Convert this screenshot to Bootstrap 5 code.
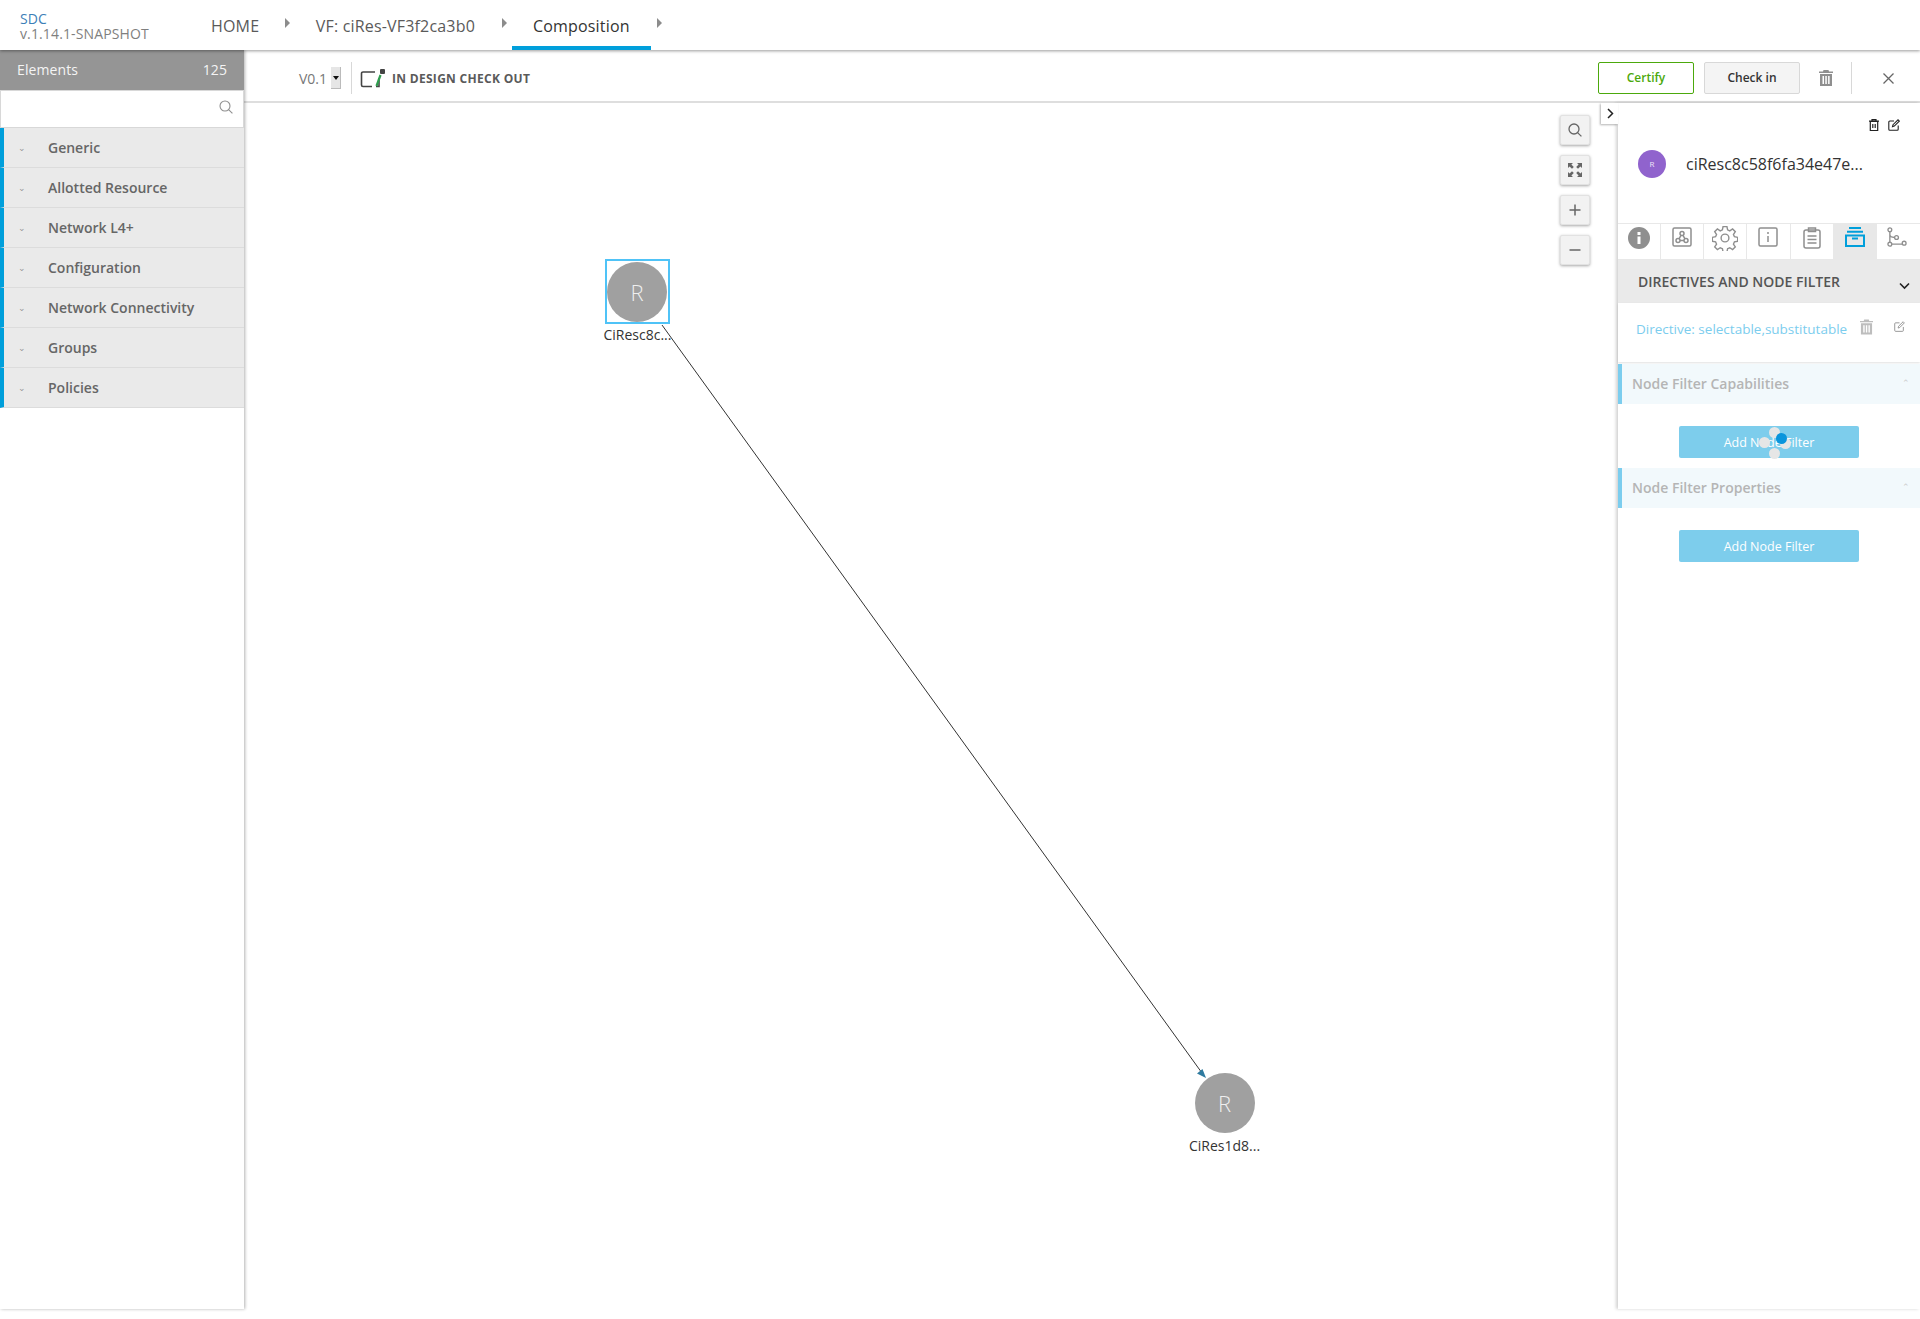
<!DOCTYPE html>
<html lang="en">
<head>
  <meta charset="UTF-8">
  <meta name="viewport" content="width=device-width, initial-scale=1.0">
  <title>SDC Composition</title>
  <link href="https://cdn.jsdelivr.net/npm/bootstrap@5.3.0/dist/css/bootstrap.min.css" rel="stylesheet">
  <style>
    body { font-family: "Open Sans", "Liberation Sans", sans-serif; color: #333; background: #fff; height: 1319px; overflow: hidden; }
    .top-head { height: 50px; position: relative; z-index: 5; box-shadow: 0 1px 3px rgba(0,0,0,.4); background: #fff; }
    .brand-box { width: 211px; padding: 10.5px 0 0 20px; font-size: 14px; line-height: 15px; color: #7f7f7f; letter-spacing: .13px; }
    .brand-box b { display: block; font-weight: 400; color: #3d7fb8; }
    .crumb { font-size: 16px; color: #5a5a5a; line-height: 52px; height: 50px; letter-spacing: .18px; }
    .crumb-arrow { width: 0; height: 0; border-left: 5px solid #8c8c8c; border-top: 5px solid transparent; border-bottom: 5px solid transparent; margin-top: -4px; }
    .arrow-a { margin-left: 26px; margin-right: 24px; }
    .arrow-b { margin-left: 27px; margin-right: 26px; }
    .arrow-c { margin-left: 6px; }
    .crumb-path { margin-left: 1.5px; }
    .crumb-active { color: #333; padding: 0 21px; border-bottom: 4px solid #009fdb; margin-left: -21px; }
    .work-row { height: 1259px; }
    .side-col { width: 244px; flex: none; position: relative; z-index: 3; box-shadow: 1px 0 3px rgba(0,0,0,.3); background: #fff; }
    .side-head { height: 40px; background: #959595; color: #f4f4f4; font-size: 14px; padding: 0 17px 2px; letter-spacing: .1px; }
    .side-search { height: 38px; border: 1px solid #d8d8d8; padding: 0 10px 4px 0; background: #fff; }
    .side-item { height: 40px; background: #eaeaea; border-left: 4px solid #009fdb; border-bottom: 1px solid #dcdcdc; font-size: 14px; font-weight: 600; color: #666; }
    .side-item span { width: 44px; font-size: 9px; font-weight: 400; padding-left: 14px; color: #999; }
    .tool-bar { height: 53px; padding-top: 5px; border-bottom: 2px solid #dedede; flex: none; }
    .ver-txt { font-size: 14px; color: #777; margin-left: 55px; width: 32px; }
    .ver-drop { width: 10px; height: 22px; background: #e6e6e6; border: 1px solid #bbb; border-width: 0 1px 1px 0; margin-right: 10px; }
    .ver-drop i { border-top: 4px solid #111; border-left: 3px solid transparent; border-right: 3px solid transparent; }
    .tool-div { width: 1px; height: 32px; background: #d8d8d8; }
    .tool-div-end { margin: 0 31px 0 18px; }
    .state-txt { font-size: 12px; font-weight: 700; color: #5a5a5a; margin: 2px 0 0 6px; letter-spacing: .3px; }
    .act-btn { width: 96px; height: 32px; font-size: 12px; font-weight: 600; padding: 0; border-radius: 2px; line-height: 30px; }
    .act-cert { color: #4ca90c; border: 1px solid #4ca90c; background: #fff; }
    .act-check { color: #333; border: 1px solid #d8d8d8; background: #f4f4f4; margin-left: 10px; }
    .trash-top { margin-left: 19px; }
    .close-x { margin-right: 26px; }
    .canvas-box { flex: 1; position: relative; background: #fff; overflow: hidden; }
    .edge-svg { position: absolute; left: 0; top: 0; width: 100%; height: 100%; }
    .node-sel { position: absolute; left: 360.5px; top: 156px; width: 65px; height: 65px; border: 2px solid #4fc3f7; }
    .node-dot { position: absolute; width: 60px; height: 60px; border-radius: 50%; background: #a0a0a0; color: #efefef; font-size: 22px; font-weight: 300; display: flex; align-items: center; justify-content: center; }
    .node-one { left: 363px; top: 159px; }
    .node-two { left: 950.5px; top: 970px; }
    .node-name { position: absolute; width: 80px; text-align: center; font-size: 14px; line-height: 18px; color: #333; white-space: nowrap; }
    .name-one { left: 353.5px; top: 223px; }
    .name-two { left: 940.5px; top: 1034px; }
    .zoom-stack { position: absolute; right: 28px; top: 12px; }
    .zoom-btn { width: 30px; height: 30px; background: #f2f2f2; border: 1px solid #e2e2e2; border-radius: 2px; box-shadow: 0 1px 3px rgba(0,0,0,.35); margin-bottom: 10px; color: #666; }
    .panel-col { width: 302px; flex: none; position: relative; background: #fff; box-shadow: -2px 0 3px rgba(0,0,0,.18); }
    .panel-tab { position: absolute; left: -17px; top: 0; width: 17px; height: 21px; padding-left: 2px; background: #fff; box-shadow: -1px 1px 2px rgba(0,0,0,.3); }
    .panel-tools { height: 44px; padding: 0 20px 0 0; gap: 9px; }
    .panel-title { height: 76px; padding: 0 0 42px 20px; font-size: 16px; color: #333; }
    .panel-avatar { width: 28px; height: 28px; border-radius: 50%; background: #9063cd; color: #efe6f8; font-size: 8px; margin-right: 20px; }
    .icon-tabs { height: 37px; border-top: 1px solid #e8e8e8; border-bottom: 1px solid #e8e8e8; }
    .icon-cell { width: 43.3px; border-right: 1px solid #e8e8e8; color: #8f8f8f; padding-top: 3px; }
    .icon-cell.on { background: #e8e8e8; color: #009fdb; border-right-color: #e8e8e8; }
    .icon-cell.last { border: 0; padding: 3px 3px 0 0; }
    .icon-cell.gear { padding-top: 1px; }
    .sec-head { height: 43px; background: #eaeaea; font-size: 14px; font-weight: 600; color: #555; padding: 0 10px 0 20px; }
    .sec-chev { margin-top: 9px; }
    .dir-row { height: 59px; padding: 16px 15px 0 18px; font-size: 13.5px; color: #7ccdee; box-shadow: 0 1px 2px rgba(0,0,0,.12); margin-bottom: 2px; align-items: flex-start !important; }
    .dir-trash { margin-left: auto; }
    .dir-edit { margin-left: 21px; margin-top: 2px; }
    .filter-head { height: 40px; background: #f2f9fc; border-left: 4px solid #7ccdee; font-size: 14px; font-weight: 600; color: #b5b5b5; padding: 0 10px 2px 10px; }
    .filter-head span { font-size: 9px; font-weight: 400; color: #ccc; }
    .filter-body { height: 64px; position: relative; padding-top: 22px; }
    .add-btn { width: 180px; height: 32px; background: #7dcdec; color: #fff; font-size: 12.5px; font-weight: 400; border: 0; border-radius: 2px; padding: 3px 0 0; margin-left: 61px; }
    .spin-dot { position: absolute; width: 11px; height: 11px; border-radius: 50%; background: #e6e6e6; }
    .spin-top { left: 150.5px; top: 22.5px; }
    .spin-left { left: 140.5px; top: 32.5px; }
    .spin-right { left: 161.5px; top: 33.5px; }
    .spin-bottom { left: 150.5px; top: 43.5px; }
    .spin-on { left: 157.5px; top: 28.5px; background: #0a95dc; }
  </style>
</head>
<body>
  <nav class="top-head d-flex align-items-start">
    <div class="brand-box"><b>SDC</b>v.1.14.1-SNAPSHOT</div>
    <div class="crumb">HOME</div>
    <div class="crumb-arrow arrow-a align-self-center"></div>
    <div class="crumb crumb-path">VF: ciRes-VF3f2ca3b0</div>
    <div class="crumb-arrow arrow-b align-self-center"></div>
    <div class="crumb crumb-active">Composition</div>
    <div class="crumb-arrow arrow-c align-self-center"></div>
  </nav>

  <div class="work-row d-flex">
    <aside class="side-col">
      <div class="side-head d-flex align-items-center justify-content-between"><span>Elements</span><span>125</span></div>
      <div class="side-search d-flex align-items-center justify-content-end">
        <svg width="14" height="14" viewBox="0 0 14 14" fill="none" stroke="#8f8f8f" stroke-width="1.1"><circle cx="6" cy="6" r="5"/><path d="M9.6 9.6l3.8 3.8"/></svg>
      </div>
      <div id="sideList"></div>
    </aside>

    <div class="flex-grow-1 d-flex flex-column">
      <div class="tool-bar d-flex align-items-center">
        <div class="ver-txt">V0.1</div>
        <div class="ver-drop d-flex align-items-center justify-content-center"><i></i></div>
        <div class="tool-div"></div>
        <svg class="ms-2" width="26" height="20" viewBox="0 0 26 20" fill="none" stroke="#444" stroke-width="1.6">
          <path d="M15 4H3a1.5 1.5 0 0 0-1.500 1.500V17a1.500 1.500 0 0 0 1.500 1.500h9"/><path d="M19 10v8.500h-3"/>
          <path d="M20.500 7l-4 11" stroke="#2e9e4f" stroke-width="2.200"/><rect x="20" y="1" width="5" height="5" rx="1" fill="#444" stroke="none"/>
        </svg>
        <div class="state-txt">IN DESIGN CHECK OUT</div>
        <div class="ms-auto d-flex align-items-center">
          <button class="btn act-btn act-cert">Certify</button>
          <button class="btn act-btn act-check">Check in</button>
          <svg class="trash-top" width="14" height="16" viewBox="0 0 14 16" fill="#8f8f8f"><path d="M4.500 0h5l.5 1.500h4V3H0V1.500h4zM1 4h12v12H1zM3.500 6v8h1.500V6zm2.800 0v8h1.500V6zm2.800 0v8h1.500V6z" fill-rule="evenodd"/></svg>
          <div class="tool-div tool-div-end"></div>
          <svg class="close-x" width="11" height="11" viewBox="0 0 11 11" stroke="#666" stroke-width="1.300"><path d="M.5.5l10 10M10.500.5l-10 10"/></svg>
        </div>
      </div>

      <div class="flex-grow-1 d-flex">
        <div class="canvas-box">
          <svg class="edge-svg">
            <line x1="418" y1="222" x2="958" y2="970" stroke="#333" stroke-width="1"/>
            <path d="M962 975l-9-4.500 5.500-4.500z" fill="#2f7ba0"/>
          </svg>
          <div class="node-sel"></div>
          <div class="node-dot node-one">R</div>
          <div class="node-name name-one">CiResc8c...</div>
          <div class="node-dot node-two">R</div>
          <div class="node-name name-two">CiRes1d8...</div>

          <div class="zoom-stack">
            <div class="zoom-btn d-flex align-items-center justify-content-center">
              <svg width="14" height="14" viewBox="0 0 14 14" fill="none" stroke="#666" stroke-width="1.300"><circle cx="6" cy="6" r="5"/><path d="M9.600 9.600l3.800 3.800"/></svg>
            </div>
            <div class="zoom-btn d-flex align-items-center justify-content-center">
              <svg width="14" height="14" viewBox="0 0 14 14" fill="#666"><path d="M0 0h5L3.400 1.600 5.800 4 4 5.800 1.600 3.400 0 5zM14 0v5l-1.600-1.600L10 5.800 8.200 4l2.400-2.400L9 0zM0 14V9l1.600 1.600L4 8.200 5.800 10l-2.400 2.400L5 14zM14 14H9l1.600-1.600L8.200 10 10 8.200l2.400 2.400L14 9z"/></svg>
            </div>
            <div class="zoom-btn d-flex align-items-center justify-content-center">
              <svg width="12" height="12" viewBox="0 0 12 12" stroke="#666" stroke-width="1.500"><path d="M6 .5v11M.5 6h11"/></svg>
            </div>
            <div class="zoom-btn d-flex align-items-center justify-content-center">
              <svg width="12" height="12" viewBox="0 0 12 12" stroke="#666" stroke-width="1.500"><path d="M.5 6h11"/></svg>
            </div>
          </div>
        </div>

        <div class="panel-col">
          <div class="panel-tab d-flex align-items-center justify-content-center">
            <svg width="7" height="11" viewBox="0 0 7 11" fill="none" stroke="#222" stroke-width="1.500"><path d="M1 1l4.500 4.500L1 10"/></svg>
          </div>
          <div class="panel-tools d-flex align-items-center justify-content-end">
            <svg width="10" height="12" viewBox="0 0 10 12" fill="none" stroke="#222" stroke-width="1.200"><path d="M0 2.200h10M3 2V.6h4V2M1.300 2.500h7.400v9H1.300z"/><path d="M3.500 5v4M5 5v4M6.500 5v4" stroke-width=".8"/></svg>
            <svg width="12" height="12" viewBox="0 0 12 12" fill="none" stroke="#222" stroke-width="1.100"><path d="M6 2H1.800a1 1 0 0 0-1 1v7.300a1 1 0 0 0 1 1h7.400a1 1 0 0 0 1-1V6.500"/><path d="M4.500 7.700l.5-2L10 .8l1.300 1.300-5 5z"/></svg>
          </div>
          <div class="panel-title d-flex align-items-center">
            <div class="panel-avatar d-flex align-items-center justify-content-center">R</div>
            <div>ciResc8c58f6fa34e47e...</div>
          </div>
          <div class="icon-tabs d-flex">
            <div class="icon-cell d-flex justify-content-center"><svg width="22" height="22" viewBox="0 0 22 22"><circle cx="11" cy="11" r="11" fill="#8f8f8f"/><rect x="9.500" y="5" width="3" height="3" fill="#fff"/><rect x="9.500" y="9.500" width="3" height="7.500" fill="#fff"/></svg></div>
            <div class="icon-cell d-flex justify-content-center"><svg width="20" height="20" viewBox="0 0 20 20" fill="none" stroke="currentColor" stroke-width="1.500"><rect x="1" y="1" width="18" height="18" rx="1.500"/><circle cx="10" cy="6.500" r="2"/><circle cx="6" cy="13.500" r="2"/><circle cx="14" cy="13.500" r="2"/><path d="M9 8.300L7 11.800M11 8.300l2 3.500M8 13.500h4"/></svg></div>
            <div class="icon-cell gear d-flex justify-content-center"><svg width="26" height="26" viewBox="0 0 24 24" fill="none" stroke="currentColor" stroke-width="1.300"><circle cx="12" cy="12" r="3.600"/><path d="M10.200 1.500h3.600l.6 3 2 .9 2.600-1.700 2.500 2.500-1.700 2.600.9 2 3 .6v3.600l-3 .6-.9 2 1.700 2.600-2.500 2.500-2.600-1.700-2 .9-.6 3h-3.600l-.6-3-2-.9-2.600 1.700-2.500-2.500 1.700-2.600-.9-2-3-.6v-3.600l3-.6.9-2-1.700-2.600 2.500-2.500 2.600 1.700 2-.9z"/></svg></div>
            <div class="icon-cell d-flex justify-content-center"><svg width="20" height="20" viewBox="0 0 20 20" fill="none" stroke="currentColor" stroke-width="1.500"><rect x="1" y="1" width="18" height="18" rx="1.500"/><path d="M10 5v2M10 9v6"/></svg></div>
            <div class="icon-cell d-flex justify-content-center"><svg width="18" height="22" viewBox="0 0 18 22" fill="none" stroke="currentColor" stroke-width="1.500"><rect x="1" y="3" width="16" height="18" rx="2"/><path d="M5.500 4.500V1h7v3.500zM4.500 9h9M4.500 12.500h9M4.500 16h9"/></svg></div>
            <div class="icon-cell on d-flex justify-content-center"><svg width="20" height="20" viewBox="0 0 20 20" fill="none" stroke="currentColor" stroke-width="2"><path d="M4 1h12M2 4.800h16"/><rect x="1" y="8.500" width="18" height="10.500"/><path d="M7 11.500h6"/></svg></div>
            <div class="icon-cell last d-flex justify-content-center"><svg width="20" height="20" viewBox="0 0 21 21" fill="none" stroke="currentColor" stroke-width="1.400"><circle cx="3" cy="3" r="2"/><circle cx="3" cy="18" r="2"/><circle cx="10" cy="11" r="2"/><circle cx="18" cy="17" r="2"/><path d="M3 5v11M5 18h11M3 8c0 2 2 3 5 3"/></svg></div>
          </div>
          <div class="sec-head d-flex align-items-center justify-content-between">
            <span>DIRECTIVES AND NODE FILTER</span>
            <svg class="sec-chev" width="11" height="8" viewBox="0 0 11 8" fill="none" stroke="#222" stroke-width="1.600"><path d="M1 1.500l4.500 4.500 4.500-4.500"/></svg>
          </div>
          <div class="dir-row d-flex">
            <span>Directive: selectable,substitutable</span>
            <svg class="dir-trash" width="13" height="16" viewBox="0 0 14 16" fill="#bdbdbd"><path d="M4.500 0h5l.5 1.500h4V3H0V1.500h4zM1 4h12v12H1zM3.500 6v8h1.500V6zm2.800 0v8h1.500V6zm2.800 0v8h1.500V6z" fill-rule="evenodd"/></svg>
            <svg class="dir-edit" width="11" height="11" viewBox="0 0 12 12" fill="none" stroke="#8f8f8f" stroke-width="1"><path d="M6 2H1.800a1 1 0 0 0-1 1v7.300a1 1 0 0 0 1 1h7.400a1 1 0 0 0 1-1V6.500"/><path d="M4.500 7.700l.5-2L10 .8l1.300 1.300-5 5z"/></svg>
          </div>
          <div class="filter-head d-flex align-items-center justify-content-between"><div>Node Filter Capabilities</div><span>⌃</span></div>
          <div class="filter-body">
            <button class="btn add-btn">Add Node Filter</button>
            <div class="spin-dot spin-top"></div>
            <div class="spin-dot spin-left"></div>
            <div class="spin-dot spin-right"></div>
            <div class="spin-dot spin-bottom"></div>
            <div class="spin-dot spin-on"></div>
          </div>
          <div class="filter-head d-flex align-items-center justify-content-between"><div>Node Filter Properties</div><span>⌃</span></div>
          <div class="filter-body">
            <button class="btn add-btn">Add Node Filter</button>
          </div>
        </div>
      </div>
    </div>
  </div>

  <script>
    const groups = ["Generic", "Allotted Resource", "Network L4+", "Configuration", "Network Connectivity", "Groups", "Policies"];
    document.getElementById("sideList").innerHTML = groups
      .map(g => `<div class="side-item d-flex align-items-center"><span>⌄</span>${g}</div>`)
      .join("");
  </script>
  <script src="https://cdn.jsdelivr.net/npm/bootstrap@5.3.0/dist/js/bootstrap.bundle.min.js"></script>
</body>
</html>
